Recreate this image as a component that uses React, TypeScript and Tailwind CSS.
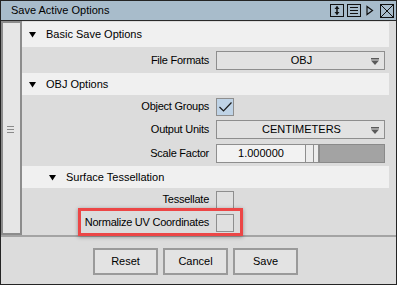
import React from 'react';

const font = { fontFamily: '"Liberation Sans", Arial, sans-serif' };

function DownTri() {
  return (
    <svg width="7" height="7" viewBox="0 0 7 7">
      <path d="M0 1 L7 1 L3.5 6.5 Z" fill="#000" />
    </svg>
  );
}

function DropArrow() {
  return (
    <svg width="8" height="7" viewBox="0 0 8 7">
      <rect x="0" y="0" width="8" height="1.5" fill="#5a5a5a" />
      <path d="M0 2.5 L8 2.5 L4 7 Z" fill="#5a5a5a" />
    </svg>
  );
}

function Header({ title, indent = false }: { title: string; indent?: boolean }) {
  return (
    <div className={`flex items-center h-[22px] bg-[#f0f0f0] ${indent ? 'pl-[27px]' : 'pl-[7px]'}`}>
      <DownTri />
      <span className="ml-[10px] text-[11px] text-black">{title}</span>
    </div>
  );
}

function Row({ label, h = 'h-[23px]', children }: { label: string; h?: string; children: React.ReactNode }) {
  return (
    <div className={`flex items-center ${h} bg-[#dcdcdc] relative`}>
      <div className="w-[188px] text-right text-[11px] tracking-[-0.25px] text-black pr-[1px]">{label}</div>
      <div className="ml-[6px] flex items-center">{children}</div>
    </div>
  );
}

function Dropdown({ value }: { value: string }) {
  return (
    <div className="w-[169px] h-[19px] bg-[#e2e2e2] border border-[#8e8e8e] flex items-center relative">
      <span className="flex-1 text-center text-[11px] text-black pl-[2px]">{value}</span>
      <div className="absolute right-[5px] top-[6px] flex">
        <DropArrow />
      </div>
    </div>
  );
}

function Check({ checked = false }: { checked?: boolean }) {
  return (
    <div className={`w-[18px] h-[18px] border border-[#8e8e8e] ${checked ? 'bg-[#bfd3e6]' : 'bg-[#e0e0e0]'}`}>
      {checked && (
        <svg width="16" height="16" viewBox="0 0 16 16">
          <path d="M2.5 8 L6.5 12 L14.5 3.5" stroke="#1a1a1a" strokeWidth="1.2" fill="none" />
        </svg>
      )}
    </div>
  );
}

function TitleIcons() {
  return (
    <div className="flex items-center">
      <svg width="14" height="13" viewBox="0 0 14 13">
        <rect x="0.5" y="0.5" width="13" height="12" fill="none" stroke="#111" />
        <path d="M7 2.5 L7 10.5" stroke="#111" strokeWidth="1.5" />
        <path d="M4.5 5 L7 2 L9.5 5 Z" fill="#111" />
        <path d="M4.5 8 L7 11 L9.5 8 Z" fill="#111" />
      </svg>
      <svg width="14" height="13" viewBox="0 0 14 13" className="ml-[3px]">
        <rect x="0.5" y="0.5" width="13" height="12" fill="none" stroke="#111" />
        <path d="M3 3.5 H11 M3 6.5 H11 M3 9.5 H11" stroke="#111" />
      </svg>
      <svg width="10" height="13" viewBox="0 0 10 13" className="ml-[3px]">
        <path d="M3 2.5 L8.5 6.5 L3 10.5 Z" fill="none" stroke="#111" strokeWidth="1.2" />
      </svg>
      <svg width="14" height="14" viewBox="0 0 14 14" className="ml-[6px]">
        <rect x="0.5" y="0.5" width="13" height="13" fill="none" stroke="#111" />
        <path d="M1 1 L13 13 M13 1 L1 13" stroke="#111" />
      </svg>
    </div>
  );
}

export default function App() {
  return (
    <div style={font} className="w-[397px] h-[285px] border border-[#242424] bg-[#dcdcdc] flex flex-col overflow-hidden">
      {/* Title bar */}
      <div className="h-[20px] shrink-0 bg-[#a8bccb] border-b border-[#2a2a2a] flex items-center justify-between pl-[10px] pr-[2px]">
        <span className="text-[11px] text-black">Save Active Options</span>
        <TitleIcons />
      </div>

      {/* Body */}
      <div className="flex h-[216px] shrink-0 border-b-2 border-[#a4a4a4]">
        {/* Collapse strip */}
        <div className="w-[21px] shrink-0 border-2 border-[#8c8c8c] bg-[#e6e6e6] flex items-center justify-center">
          <div className="flex flex-col gap-[2px] w-[7px] -ml-[3px] mt-[3px]">
            <div className="h-[1px] bg-[#8a8a8a]" />
            <div className="h-[1px] bg-[#8a8a8a]" />
            <div className="h-[1px] bg-[#8a8a8a]" />
          </div>
        </div>

        {/* Options */}
        <div className="w-[367px] flex flex-col pt-[1px]">
          <div className="flex items-center h-[25px] bg-[#f0f0f0] pl-[7px]">
            <DownTri />
            <span className="ml-[10px] text-[11px] text-black">Basic Save Options</span>
          </div>
          <Row label="File Formats" h="h-[26px]">
            <Dropdown value="OBJ" />
          </Row>
          <Header title="OBJ Options" />
          <Row label="Object Groups">
            <Check checked />
          </Row>
          <Row label="Output Units">
            <Dropdown value="CENTIMETERS" />
          </Row>
          <Row label="Scale Factor" h="h-[25px]">
            <div className="flex h-[19px]">
              <div className="w-[90px] bg-[#f2f2f2] border border-[#8e8e8e] flex items-center justify-center text-[11px] text-black">
                1.000000
              </div>
              <div className="w-[7px] bg-[#ececec] border-y border-[#8e8e8e]" />
              <div className="w-[6px] bg-[#ececec] border border-[#8e8e8e]" />
              <div className="w-[66px] bg-[#a3a3a3] border border-[#8a8a8a]" />
            </div>
          </Row>
          <Header title="Surface Tessellation" indent />
          <Row label="Tessellate">
            <Check />
          </Row>
          <Row label="Normalize UV Coordinates">
            <Check />
            <div className="absolute left-[56px] top-[-3px] w-[165px] h-[28px] border-[3px] border-[#ec4646] shadow-[0_1px_4px_rgba(0,0,0,0.35)] pointer-events-none" />
          </Row>
        </div>
      </div>

      {/* Buttons */}
      <div className="flex justify-center gap-[5px] pt-[11px] pr-[6px]">
        {['Reset', 'Cancel', 'Save'].map((b) => (
          <div
            key={b}
            className="w-[65px] h-[27px] bg-[#e3e3e3] border-2 border-[#9a9a9a] flex items-center justify-center text-[11px] text-black"
          >
            {b}
          </div>
        ))}
      </div>
    </div>
  );
}
